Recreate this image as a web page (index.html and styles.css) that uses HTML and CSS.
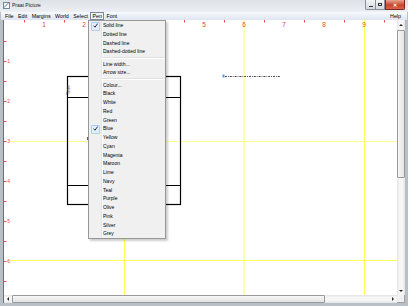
FILE: index.html
```html
<!DOCTYPE html>
<html lang="en">
<head>
  <meta charset="UTF-8">
  <title>Praat Picture</title>
  <link rel="stylesheet" href="styles.css">
</head>
<body>
  <div class="window">
    <!-- Barra de titulo -->
    <div class="titlebar">
      <span class="app-icon"></span>
      <span class="title">Praat Picture</span>
      <div class="controls">
        <span class="ctl min"><i class="glyph-min"></i></span>
        <span class="ctl max"><i class="glyph-max"></i></span>
        <span class="ctl close">&#x2715;</span>
      </div>
    </div>

    <!-- Menu principal -->
    <div class="menubar">
      <span class="menu-item">File</span>
      <span class="menu-item">Edit</span>
      <span class="menu-item">Margins</span>
      <span class="menu-item">World</span>
      <span class="menu-item">Select</span>
      <span class="menu-item open">Pen</span>
      <span class="menu-item">Font</span>
      <span class="menu-spacer"></span>
      <span class="menu-item">Help</span>
    </div>

    <div class="client">
      <div class="main-row">
        <div class="canvas">
          <svg width="393" height="275" viewBox="4 20 393 275">
            <g class="grid">
              <line x1="124.5" y1="20" x2="124.5" y2="295"/>
              <line class="wide" x1="244" y1="20" x2="244" y2="295"/>
              <line x1="364.5" y1="20" x2="364.5" y2="295"/>
              <line class="pale" x1="10" y1="141.5" x2="397" y2="141.5"/>
              <line x1="10" y1="260.5" x2="397" y2="260.5"/>
            </g>
            <g class="figure">
              <rect x="67.5" y="76.5" width="113" height="128"/>
              <line x1="67.5" y1="97.5" x2="180.5" y2="97.5"/>
              <line x1="67.5" y1="185.5" x2="180.5" y2="185.5"/>
            </g>
            <text class="label" transform="translate(70 95) rotate(-90)">Time</text>
            <line class="mark" x1="87.5" y1="137" x2="87.5" y2="140"/>
            <line class="dashdot" x1="225" y1="76.5" x2="280" y2="76.5"/>
            <rect class="marker" x="222.5" y="74.5" width="2" height="3"/>

            <!-- Regla superior -->
            <g class="ticks">
              <line x1="24.5" y1="20" x2="24.5" y2="22.5"/>
              <line x1="64.5" y1="20" x2="64.5" y2="22.5"/>
              <line x1="104.5" y1="20" x2="104.5" y2="22.5"/>
              <line x1="184.5" y1="20" x2="184.5" y2="22.5"/>
              <line x1="224.5" y1="20" x2="224.5" y2="22.5"/>
              <line x1="264.5" y1="20" x2="264.5" y2="22.5"/>
              <line x1="304.5" y1="20" x2="304.5" y2="22.5"/>
              <line x1="344.5" y1="20" x2="344.5" y2="22.5"/>
              <line x1="384.5" y1="20" x2="384.5" y2="22.5"/>
              <line x1="4" y1="41.5" x2="6.5" y2="41.5"/>
              <line x1="4" y1="61.5" x2="6.5" y2="61.5"/>
              <line x1="4" y1="81.5" x2="6.5" y2="81.5"/>
              <line x1="4" y1="101.5" x2="6.5" y2="101.5"/>
              <line x1="4" y1="121.5" x2="6.5" y2="121.5"/>
              <line x1="4" y1="141.5" x2="6.5" y2="141.5"/>
              <line x1="4" y1="161.5" x2="6.5" y2="161.5"/>
              <line x1="4" y1="181.5" x2="6.5" y2="181.5"/>
              <line x1="4" y1="201.5" x2="6.5" y2="201.5"/>
              <line x1="4" y1="221.5" x2="6.5" y2="221.5"/>
              <line x1="4" y1="241.5" x2="6.5" y2="241.5"/>
              <line x1="4" y1="261.5" x2="6.5" y2="261.5"/>
              <line x1="4" y1="281.5" x2="6.5" y2="281.5"/>
            </g>
            <g class="ruler-x">
              <text x="44" y="27">1</text>
              <text x="84" y="27">2</text>
              <text x="124" y="27">3</text>
              <text x="164" y="27">4</text>
              <text x="204" y="27">5</text>
              <text x="244" y="27">6</text>
              <text x="284" y="27">7</text>
              <text x="324" y="27">8</text>
              <text x="364" y="27">9</text>
            </g>
            <g class="ruler-y">
              <text x="7.3" y="63">1</text>
              <text x="7.3" y="103">2</text>
              <text x="7.3" y="143">3</text>
              <text x="7.3" y="183">4</text>
              <text x="7.3" y="223">5</text>
              <text x="7.3" y="263">6</text>
            </g>
          </svg>

          <!-- Menu desplegable de Pen -->
          <div class="dropdown">
            <div class="opt checked"><svg class="check" viewBox="0 0 5 5"><path d="M0.5 2.7 L2 4.2 L4.6 0.6"/></svg>Solid line</div>
            <div class="opt">Dotted line</div>
            <div class="opt">Dashed line</div>
            <div class="opt">Dashed-dotted line</div>
            <div class="sep"></div>
            <div class="opt">Line width...</div>
            <div class="opt">Arrow size...</div>
            <div class="sep"></div>
            <div class="opt">Colour...</div>
            <div class="opt">Black</div>
            <div class="opt">White</div>
            <div class="opt">Red</div>
            <div class="opt">Green</div>
            <div class="opt checked"><svg class="check" viewBox="0 0 5 5"><path d="M0.5 2.7 L2 4.2 L4.6 0.6"/></svg>Blue</div>
            <div class="opt">Yellow</div>
            <div class="opt">Cyan</div>
            <div class="opt">Magenta</div>
            <div class="opt">Maroon</div>
            <div class="opt">Lime</div>
            <div class="opt">Navy</div>
            <div class="opt">Teal</div>
            <div class="opt">Purple</div>
            <div class="opt">Olive</div>
            <div class="opt">Pink</div>
            <div class="opt">Silver</div>
            <div class="opt">Grey</div>
          </div>
        </div>

        <!-- Barra vertical -->
        <div class="vscroll">
          <div class="sbtn up"><i class="arrow-up"></i></div>
          <div class="thumb-v"></div>
          <div class="track"></div>
          <div class="sbtn down"><i class="arrow-down"></i></div>
        </div>
      </div>

      <!-- Barra horizontal -->
      <div class="hscroll-row">
        <div class="hscroll">
          <div class="sbtn-h"><i class="arrow-left"></i></div>
          <div class="thumb-h"></div>
          <div class="track"></div>
          <div class="sbtn-h"><i class="arrow-right"></i></div>
        </div>
        <div class="corner"></div>
      </div>
    </div>
  </div>
</body>
</html>
```

FILE: styles.css
```css
* {
  box-sizing: border-box;
}

body {
  margin: 0;
  width: 408px;
  height: 306px;
  overflow: hidden;
  font-family: "Liberation Sans", Arial, sans-serif;
  background: #bcc3cc;
}

.window {
  display: flex;
  flex-direction: column;
  width: 408px;
  height: 306px;
  background: #b9bfc7;
}

/* Barra de titulo */
.titlebar {
  display: flex;
  align-items: flex-start;
  height: 12px;
  flex: none;
  background: linear-gradient(#dde2e8, #eceff3);
}

.app-icon {
  width: 7px;
  height: 7px;
  margin: 2px 0 0 3px;
  border: 1px solid #7b8794;
  background: linear-gradient(135deg, #fff 40%, #9fc1e6 40%, #9fc1e6 60%, #fff 60%);
}

.title {
  font-size: 5px;
  line-height: 11px;
  margin-left: 2px;
  color: #1a1a1a;
}

.controls {
  display: flex;
  margin-left: auto;
  margin-right: 3px;
}

.ctl {
  width: 10px;
  height: 10px;
  display: flex;
  align-items: center;
  justify-content: center;
  border: 1px solid #8a919b;
  border-top: 0;
  background: linear-gradient(#f4f5f7, #d5dae0);
}

.ctl.min {
  border-radius: 0 0 0 2px;
  border-right: 0;
}

.glyph-min {
  width: 4px;
  height: 1px;
  margin-top: 3px;
  background: #333;
}

.glyph-max {
  width: 4px;
  height: 3px;
  border: 1px solid #333;
  border-top-width: 1.5px;
}

.ctl.close {
  width: 20px;
  border-color: #7d2a1d;
  border-radius: 0 0 2px 0;
  background: linear-gradient(#e9a494, #c94530 55%, #d5634d);
  color: #fff;
  font-size: 5px;
  font-weight: bold;
}

/* Menu principal */
.menubar {
  display: flex;
  align-items: center;
  flex: none;
  height: 8px;
  margin: 0 1px;
  padding: 0 3.75px 0 1.75px;
  background: linear-gradient(#f8fafd, #dde5f1);
  font-size: 5.3px;
  color: #000;
}

.menu-item {
  padding: 0 1.25px;
  line-height: 6px;
  border: 1px solid transparent;
}

.menu-item.open {
  border-color: #7d8a9b;
  background: #eef2f7;
}

.menu-spacer {
  flex: 1;
}

.client {
  flex: 1;
  display: flex;
  flex-direction: column;
  margin: 0 3px 3px 3px;
  border-left: 1px solid #6d6f73;
}

.main-row {
  display: flex;
  height: 275px;
}

.canvas {
  position: relative;
  width: 393px;
  height: 275px;
  background: #fff;
  overflow: hidden;
}

.canvas > svg {
  display: block;
}

/* Dibujo */
.grid line {
  stroke: #ffff55;
  stroke-width: 1;
}

.grid line.wide {
  stroke: #ffff9a;
  stroke-width: 1.6;
}

.grid line.pale {
  stroke: #ffff90;
}

.figure rect,
.figure line {
  fill: none;
  stroke: #000;
  stroke-width: 1.2;
}

.label {
  font-size: 4.5px;
  fill: #555;
}

.mark {
  stroke: #9b4a3a;
  stroke-width: 1;
}

.dashdot {
  stroke: #4a4a4a;
  stroke-width: 1;
  stroke-dasharray: 2 1 0.8 1;
}

.marker {
  fill: #5b9bd5;
}

.ticks line {
  stroke: #e8504a;
  stroke-width: 1;
}

.ruler-x text {
  fill: #e6403a;
  font-size: 6.5px;
  text-anchor: middle;
}

.ruler-y text {
  fill: #e6403a;
  font-size: 5px;
}

/* Menu desplegable */
.dropdown {
  position: absolute;
  left: 84px;
  top: 0;
  width: 78px;
  height: 219px;
  border: 1px solid #979797;
  background: linear-gradient(to right, transparent 11.5px, #e2e3e3 11.5px, #e2e3e3 12.5px, #fff 12.5px, #fff 13.5px, transparent 13.5px), #f0f0f0;
  box-shadow: 2px 2px 2px rgba(0, 0, 0, 0.2);
  font-size: 5px;
  color: #000;
}

.opt {
  position: relative;
  height: 8.75px;
  line-height: 8.75px;
  padding-left: 14px;
  white-space: nowrap;
}

.opt.checked::before {
  content: "";
  position: absolute;
  left: 2px;
  top: 0.5px;
  width: 7px;
  height: 7.5px;
  border: 1px solid #a9cdf4;
  border-radius: 1px;
  background: #e4eefb;
}

.check {
  position: absolute;
  left: 3.5px;
  top: 2px;
  width: 5px;
  height: 5px;
}

.check path {
  fill: none;
  stroke: #1b2f55;
  stroke-width: 1;
}

.sep {
  height: 3.5px;
  margin-left: 12px;
  display: flex;
  flex-direction: column;
  justify-content: center;
}

.sep::before {
  content: "";
  border-top: 1px solid #e0e0e0;
  border-bottom: 1px solid #fff;
}

/* Barras de desplazamiento */
.vscroll {
  width: 8px;
  display: flex;
  flex-direction: column;
  background: linear-gradient(to right, #e4e4e4, #f6f6f6 30%, #f6f6f6 70%, #e4e4e4);
}

.sbtn {
  flex: none;
  height: 9px;
  display: flex;
  align-items: center;
  justify-content: center;
}

.sbtn.down {
  height: 8px;
}

.thumb-v {
  flex: none;
  height: 148px;
  margin-top: 1px;
  border: 1px solid #9a9a9a;
  border-radius: 1px;
  background: linear-gradient(to right, #f7f7f7, #e3e3e3);
}

.track {
  flex: 1;
}

.arrow-up {
  border-left: 2px solid transparent;
  border-right: 2px solid transparent;
  border-bottom: 2px solid #2a2a2a;
}

.arrow-down {
  border-left: 2px solid transparent;
  border-right: 2px solid transparent;
  border-top: 2px solid #2a2a2a;
}

.arrow-left {
  border-top: 2px solid transparent;
  border-bottom: 2px solid transparent;
  border-right: 2px solid #2a2a2a;
}

.arrow-right {
  border-top: 2px solid transparent;
  border-bottom: 2px solid transparent;
  border-left: 2px solid #2a2a2a;
}

.hscroll-row {
  display: flex;
  height: 8px;
}

.hscroll {
  width: 393px;
  display: flex;
  background: linear-gradient(#e4e4e4, #f6f6f6 30%, #f6f6f6 70%, #e4e4e4);
}

.sbtn-h {
  flex: none;
  width: 8px;
  display: flex;
  align-items: center;
  justify-content: center;
}

.thumb-h {
  flex: none;
  width: 313px;
  margin-left: 0;
  border: 1px solid #9a9a9a;
  border-radius: 1px;
  background: linear-gradient(#f7f7f7, #e3e3e3);
}

.corner {
  width: 8px;
  background: #f0f0f0;
  border-right: 1px solid #a0a0a0;
  border-bottom: 1px solid #a0a0a0;
}
```
